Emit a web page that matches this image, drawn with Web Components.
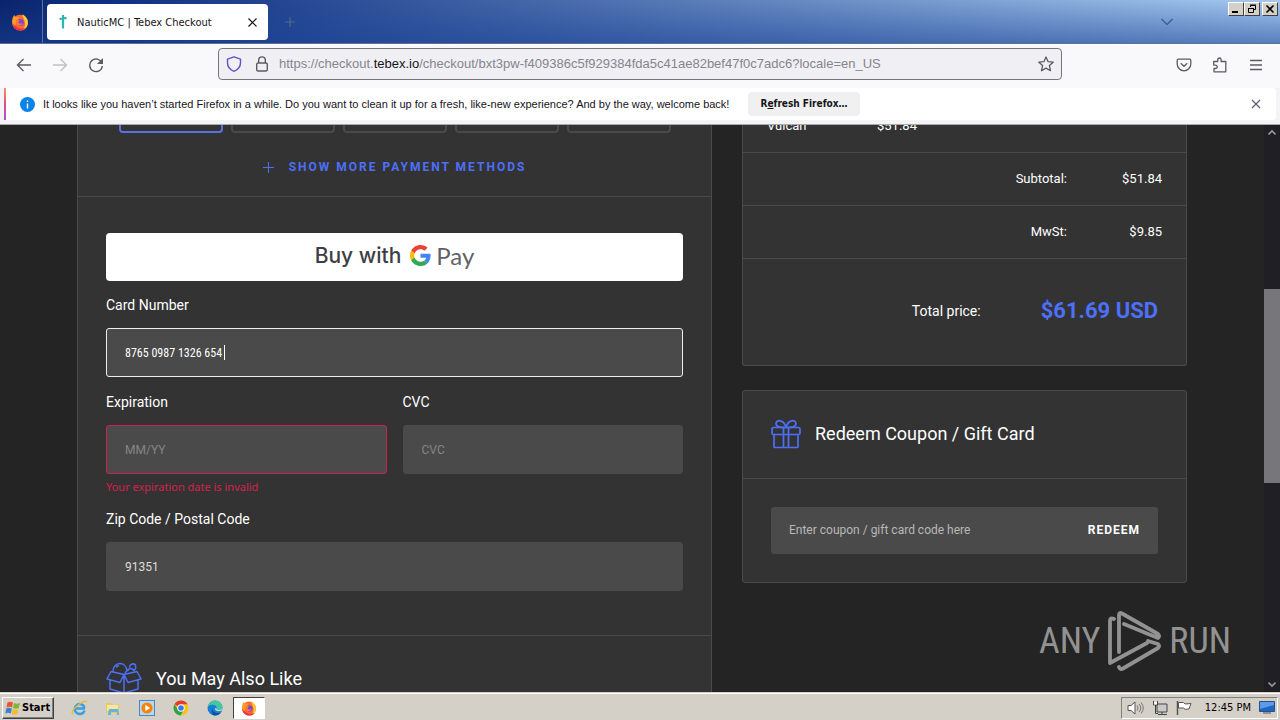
<!DOCTYPE html>
<html lang="en">
<head>
<meta charset="utf-8">
<title>NauticMC | Tebex Checkout</title>
<style>
  html, body { margin: 0; height: 100%; }
  body { font-family: Roboto, sans-serif; overflow: hidden; }
</style>
</head>
<body>
<desktop-screen></desktop-screen>

<script>
const BASE = `<style>
  *, *::before, *::after { box-sizing: border-box; }
  button { font: inherit; color: inherit; background: none; border: 0; padding: 0; margin: 0; }
  svg { display: block; flex: none; }
</style>`;

function define(name, render) {
  customElements.define(name, class extends HTMLElement {
    connectedCallback() {
      if (this.shadowRoot) return;
      this.attachShadow({ mode: 'open' }).innerHTML = BASE + render(this);
    }
  });
}

const firefox = size => `<svg width="${size}" height="${size}" viewBox="0 0 16 16" aria-hidden="true">
  <circle cx="8" cy="8.6" r="7" fill="#ff6a2b"/>
  <path d="M10 1c3 1.500 5.200 4.300 5 8-.3 3.600-3 6.600-7 6.600 3-1 5-3.500 4.500-7C12.200 5.500 10.500 4 10 1z" fill="#ffc83a"/>
  <path d="M1.200 7C1 4.500 2 3 3 1.800c.3 1 .8 1.600 1.400 2 1-.4 2-.4 3 .2L5 7.500 3 13C1.600 11.200 1.100 9 1.200 7z" fill="#ff9a2b"/>
  <path d="M1.200 9c.6 4 3.500 6.600 7 6.600 2.300 0 4.300-1 5.500-2.700-3.700 1.700-9 .8-12.500-3.900z" fill="#f0304f"/>
  <circle cx="8.300" cy="8.500" r="3.100" fill="#7a45d8"/>
  <path d="M4.400 6.400c1.200-.8 2.600-.2 3.900.3-1 .3-1.600.9-1.700 1.700 1 1.500 2.700 1 3.900.7-.8 1.700-2.500 2.500-4.200 1.900-1.700-.7-2.400-2.800-1.900-4.600z" fill="#ff7a33"/>
</svg>`;

define('desktop-screen', () => `
<style>
  :host { display: flex; flex-direction: column; height: 100vh; min-height: 0; }
  title-bar, tool-bar, notice-bar, task-bar { flex: none; }
  checkout-page { flex: 1; min-height: 0; }
</style>
<title-bar></title-bar>
<tool-bar></tool-bar>
<notice-bar></notice-bar>
<checkout-page></checkout-page>
<task-bar></task-bar>`);

define('title-bar', () => `
<style>
  :host { display: flex; height: 44px; border-bottom: 1px solid #5f6f94; color: #15141a;
    font: 11px/16px Tahoma, "DejaVu Sans Condensed", "DejaVu Sans", sans-serif;
    background: linear-gradient(180deg, rgba(20,60,150,0) 0%, rgba(25,65,150,.55) 100%), linear-gradient(90deg, #0a246a 0%, #0e2f80 8%, #a6caf0 100%); }
  .view { width: 43px; display: grid; place-items: center; padding-right: 3px; border-right: 1px solid #5a71a8; }
  .tab { display: flex; align-items: center; gap: 8px; width: 221px; margin: 4px 0 3px 4px; padding: 0 10px; border-radius: 4px; background: #fff; }
  .tab span { flex: 1; white-space: nowrap; padding-top: 2px; }
  .new { width: 43px; display: grid; place-items: center; }
  .all { margin-left: auto; width: 40px; display: grid; place-items: center; margin-right: 41px; }
  .win { display: flex; padding: 2px 2px 0 0; align-items: flex-start; }
  .win button { width: 16px; height: 14px; display: grid; place-items: center; background: #d4d0c8; border: 1px solid; border-color: #fff #404040 #404040 #fff; }
  .win button:last-child { margin-left: 2px; }
</style>
<div class="view">${firefox(18)}</div>
<div class="tab">
  <svg width="12" height="16" viewBox="0 0 12 16"><path d="M6 1v13.500M2.500 5l7-1.200" stroke="#2fb5ae" stroke-width="2.200" fill="none"/></svg>
  <span>NauticMC | Tebex Checkout</span>
  <button aria-label="Close tab"><svg width="11" height="11" viewBox="0 0 11 11"><path d="M1.500 1.500l8 8M9.500 1.500l-8 8" stroke="#15141a" stroke-width="1.200"/></svg></button>
</div>
<button class="new" aria-label="New tab"><svg width="12" height="12" viewBox="0 0 12 12"><path d="M6 1v10M1 6h10" stroke="#52688a" stroke-width="1.200"/></svg></button>
<button class="all" aria-label="List all tabs"><svg width="14" height="8" viewBox="0 0 14 8"><path d="M1.500 1L7 6.500 12.500 1" stroke="#43608f" stroke-width="1.500" fill="none"/></svg></button>
<div class="win">
  <button aria-label="Minimize"><svg width="10" height="10" viewBox="0 0 10 10"><path d="M1 8h6" stroke="#000" stroke-width="2"/></svg></button>
  <button aria-label="Restore"><svg width="10" height="10" viewBox="0 0 10 10"><path d="M3.500 3V1.500h5v4H7M3 1h6M1.500 5v3.500h5V5M1 4.500h6" stroke="#000" fill="none"/></svg></button>
  <button aria-label="Close"><svg width="10" height="10" viewBox="0 0 10 10"><path d="M1.500 1.500l7 7M8.500 1.500l-7 7" stroke="#000" stroke-width="1.600"/></svg></button>
</div>`);

define('tool-bar', () => `
<style>
  :host { display: flex; align-items: center; height: 44px; background: #f9f9fb; border-top: 1px solid #fff; padding: 0 16px;
    font: 13px/18px "Liberation Sans", sans-serif; }
  .nav { display: flex; gap: 20px; width: 202px; flex: none; }
  .url { flex: 0 1 844px; display: flex; align-items: center; height: 32px; margin-bottom: 5px; border: 1px solid #75757e; border-radius: 4px; background: #f0f0f4; padding: 0 7px; }
  .url svg + svg { margin: 0 9px 0 12px; }
  .url a { flex: 1; color: #85858c; text-decoration: none; white-space: nowrap; overflow: hidden; }
  .url b { font-weight: normal; color: #15141a; }
  .tools { margin-left: auto; display: flex; gap: 20px; }
  .nav, .tools { margin-bottom: 4px; }
</style>
<div class="nav">
  <button aria-label="Back"><svg width="16" height="16" viewBox="0 0 16 16"><path d="M15 8H1.500M7.500 2l-6 6 6 6" stroke="#5b5b66" stroke-width="1.400" fill="none"/></svg></button>
  <button aria-label="Forward" disabled><svg width="16" height="16" viewBox="0 0 16 16"><path d="M1 8h13.500M8.500 2l6 6-6 6" stroke="#c0c0c6" stroke-width="1.400" fill="none"/></svg></button>
  <button aria-label="Reload"><svg width="16" height="16" viewBox="0 0 16 16"><path d="M13.900 6A6.300 6.300 0 1 0 14.300 9" stroke="#5b5b66" stroke-width="1.400" fill="none"/><path d="M15 1v6H9z" fill="#5b5b66"/></svg></button>
</div>
<div class="url">
  <svg width="16" height="16" viewBox="0 0 16 16"><path d="M8 .8l6.500 2.400v3.600c0 4-2.600 7-6.500 8.500C4.100 13.800 1.500 10.800 1.500 6.800V3.200z" stroke="#6650c0" stroke-width="1.400" fill="none" stroke-linejoin="round"/></svg>
  <svg width="16" height="16" viewBox="0 0 16 16"><rect x="2.700" y="7" width="10.600" height="8" rx="1.500" stroke="#5b5b66" stroke-width="1.400" fill="none"/><path d="M4.700 7V4.200a3.300 3.300 0 0 1 6.600 0V7" stroke="#5b5b66" stroke-width="1.400" fill="none"/></svg>
  <a href="#checkout">https://checkout.<b>tebex.io</b>/checkout/bxt3pw-f409386c5f929384fda5c41ae82bef47f0c7adc6?locale=en_US</a>
  <button aria-label="Bookmark this page"><svg width="16" height="16" viewBox="0 0 16 16"><path d="M8 1l2.100 4.700 5.100.5-3.800 3.400 1.100 5.100L8 12.100l-4.500 2.600 1.100-5.100L.8 6.200l5.100-.5z" stroke="#5b5b66" stroke-width="1.300" fill="none" stroke-linejoin="round"/></svg></button>
</div>
<div class="tools">
  <button aria-label="Save to Pocket"><svg width="16" height="16" viewBox="0 0 16 16"><path d="M2.500 2.200h11a1.300 1.300 0 0 1 1.300 1.300V7a6.800 6.800 0 0 1-13.600 0V3.500a1.300 1.300 0 0 1 1.300-1.300zM4.800 6.300L8 9.300l3.200-3" stroke="#5b5b66" stroke-width="1.300" fill="none"/></svg></button>
  <button aria-label="Extensions"><svg width="16" height="16" viewBox="0 0 16 16"><path d="M2 14.800V11.500h1.500a1.700 1.700 0 0 0 0-3.400H1.700V4.500h4V2.700a1.700 1.700 0 0 1 3.400 0v1.800h4.700v10.300z" stroke="#5b5b66" stroke-width="1.300" fill="none" stroke-linejoin="round"/></svg></button>
  <button aria-label="Menu"><svg width="16" height="16" viewBox="0 0 16 16"><path d="M2 3.500h12M2 8h12M2 12.500h12" stroke="#5b5b66" stroke-width="1.300"/></svg></button>
</div>`);

define('notice-bar', () => `
<style>
  :host { display: flex; height: 37px; background: #f4f4f6; border-bottom: 1px solid #aaa; padding: 0 4px 4px; }
  .bar { flex: 1; display: flex; align-items: center; background: #fff; border-radius: 0 4px 4px 0; padding: 0 12px 0 14px;
    border-left: 2px solid; border-image: linear-gradient(#f7925a, #e84b90, #9a55d8) 1;
    font: 11px/16px "Liberation Sans", sans-serif; color: #15141a; }
  p { flex: none; min-width: 705px; margin: 0 0 0 8px; white-space: nowrap; }
  .act { width: 112px; height: 24px; background: #f0f0f1; border-radius: 4px; font: bold 10px/16px Tahoma, "DejaVu Sans Condensed", "DejaVu Sans", sans-serif; white-space: nowrap; }
  .x { margin-left: auto; width: 16px; display: grid; place-items: center; }
</style>
<div class="bar" role="status">
  <svg width="15" height="15" viewBox="0 0 15 15"><circle cx="7.500" cy="7.500" r="7.500" fill="#0a84e6"/><path d="M7.500 6.500v5M7.500 3.500v1.500" stroke="#fff" stroke-width="1.400"/></svg>
  <p>It looks like you haven’t started Firefox in a while. Do you want to clean it up for a fresh, like-new experience? And by the way, welcome back!</p>
  <button class="act">R<u>e</u>fresh Firefox…</button>
  <button class="x" aria-label="Close message"><svg width="10" height="10" viewBox="0 0 10 10"><path d="M1 1l8 8M9 1L1 9" stroke="#5b5b66" stroke-width="1.200"/></svg></button>
</div>`);

define('checkout-page', () => `
<style>
  :host { display: flex; position: relative; background: #242424; color: #fff; overflow: hidden; font: 14px/20px Roboto, sans-serif; }
  main { flex: 1; overflow: hidden; }
  .columns { display: grid; grid-template-columns: 635fr 445fr; gap: 30px; align-items: start; max-width: 1110px; margin: -25px auto 0; }
  aside { display: grid; gap: 24px; }
  page-scrollbar { flex: none; }
  run-watermark { position: absolute; right: 49px; bottom: 20px; }
</style>
<main><div class="columns">
  <payment-card></payment-card>
  <aside><order-summary></order-summary><coupon-card></coupon-card></aside>
</div></main>
<page-scrollbar></page-scrollbar>
<run-watermark></run-watermark>`);

define('payment-card', () => `
<style>
  :host { display: block; background: #333; border: 1px solid #4a4a4a; border-top: 0; }
  section { border-bottom: 1px solid #4a4a4a; padding: 0 28px; }
  .methods { padding-bottom: 19px; }
  .tiles { display: flex; justify-content: center; gap: 8px; }
  .tiles button { width: 104px; height: 33px; border: 2px solid #4a4a4a; border-top: 0; border-radius: 0 0 4px 4px; }
  .tiles button:first-child { border-color: #5a6fe0; }
  .more { display: flex; align-items: center; justify-content: center; gap: 15px; width: 100%; margin-top: 24px;
    color: #4d70fa; font-weight: 700; font-size: 12px; line-height: 20px; letter-spacing: 2px; text-transform: uppercase; }
  .form { padding-top: 36px; padding-bottom: 44px; }
  .gpay { display: flex; align-items: center; justify-content: center; width: 100%; height: 48px; margin-bottom: 14px; padding-bottom: 2px; background: #fff; border-radius: 4px; color: #3c4043; font: 500 21px/28px Inter, Roboto, sans-serif; }
  .gpay svg { margin: 0 5px 2px 9px; }
  .gpay .pay { font: 400 24px/28px Lato, Roboto, sans-serif; color: #5f6368; }
  form { display: grid; grid-template-columns: 1fr 1fr; column-gap: 16px; row-gap: 15px; align-items: start; }
  .wide { grid-column: 1 / -1; }
  .also { display: flex; align-items: flex-start; gap: 14px; border: 0; padding-top: 26px; height: 80px; }
  h2 { margin: 4px 0 0; font-weight: 400; font-size: 18px; line-height: 26px; }
</style>
<section class="methods">
  <div class="tiles">${[1, 2, 3, 4, 5].map(n => `<button aria-label="Payment method ${n}"></button>`).join('')}</div>
  <button class="more"><svg width="11" height="11" viewBox="0 0 11 11"><path d="M5.500 0v11M0 5.500h11" stroke="#4d70fa"/></svg>Show more payment methods</button>
</section>
<section class="form">
  <button class="gpay"><span>Buy with</span>
    <svg width="21" height="21" viewBox="0 0 48 48"><path fill="#EA4335" d="M24 9.500c3.500 0 6.700 1.200 9.200 3.600l6.900-6.900C35.900 2.400 30.500 0 24 0 14.600 0 6.500 5.400 2.600 13.200l8 6.200C12.400 13.700 17.700 9.500 24 9.500z"/><path fill="#4285F4" d="M47 24.600c0-1.600-.2-3.100-.4-4.600H24v9h12.900c-.6 3-2.300 5.500-4.800 7.200l7.700 6C44.400 38 47 31.800 47 24.600z"/><path fill="#FBBC05" d="M10.500 28.600a14.500 14.500 0 0 1 0-9.200l-8-6.200a24 24 0 0 0 0 21.600z"/><path fill="#34A853" d="M24 48c6.500 0 11.900-2.100 15.900-5.800l-7.700-6c-2.200 1.500-5 2.300-8.200 2.300-6.300 0-11.600-4.200-13.500-9.900l-8 6.200C6.500 42.600 14.600 48 24 48z"/></svg>
    <span class="pay">Pay</span></button>
  <form>
    <text-field class="wide" label="Card Number" value="8765 0987 1326 654" active></text-field>
    <text-field label="Expiration" placeholder="MM/YY" error="Your expiration date is invalid"></text-field>
    <text-field label="CVC" placeholder="CVC"></text-field>
    <text-field class="wide" label="Zip Code / Postal Code" value="91351"></text-field>
  </form>
</section>
<section class="also">
  <svg width="36" height="32" viewBox="0 0 36 32" fill="none" stroke="#4d70fa" stroke-width="1.500" stroke-linejoin="round"><path d="M5 9.500L1 17l13 3.500 4-8zM31 9.500l4 7.500-13 3.500-4-8zM5 9.500l13 3 13-3M4 18v9l14 4 14-4v-9M18 12.500V31M7 9.500C7 5 10 1.500 14 1.500S20.500 5 21 8.500L19 11M21.500 9c1-3 4-3.500 6-1 2 .3 3-3 1.500-5.500-2.500-1.500-5.500 0-5.500 3M10 5l3-1.500M26 7l2.500 2"/></svg>
  <h2>You May Also Like</h2>
</section>`);

define('text-field', el => {
  const get = k => el.getAttribute(k);
  return `
<style>
  :host { display: block; min-width: 0; }
  label { display: block; margin-bottom: 13px; line-height: 20px; }
  .box { position: relative; }
  input { display: block; width: 100%; height: 49px; padding: 0 18px; border: 1px solid #4a4a4a; border-radius: 3px; background: #4a4a4a; color: #ddd; font: 12px/20px Roboto, sans-serif; outline: 0; }
  input::placeholder { color: #858585; opacity: 1; }
  :host([active]) input { border-color: #eee; color: #fff; font: 12px/20px "Roboto Condensed", Roboto, sans-serif; }
  :host([error]) input { border-color: #c9244f; }
  .caret { position: absolute; left: 118px; top: 17px; width: 1px; height: 15px; background: #fff; }
  .error { margin: 6px 0 0; color: #d3214f; font: 11px/14px "Noto Sans", sans-serif; }
</style>
<label for="field">${get('label')}</label>
<div class="box"><input id="field" type="text" placeholder="${get('placeholder') || ''}" value="${get('value') || ''}">${el.hasAttribute('active') ? '<span class="caret"></span>' : ''}</div>
${get('error') ? `<p class="error" role="alert">${get('error')}</p>` : ''}`;
});

define('order-summary', () => `
<style>
  :host { display: block; background: #333; border: 1px solid #4a4a4a; border-top: 0; border-radius: 0 0 3px 3px; font-size: 13px; }
  table { width: 100%; border-collapse: separate; border-spacing: 0; table-layout: fixed; }
  col.name { width: 134px; } col.value { width: 119px; }
  td, th { height: 53px; padding: 0 24px 0 0; border-bottom: 1px solid #4a4a4a; font-weight: 400; text-align: right; vertical-align: middle; }
  .item th { padding-left: 24px; text-align: left; }
  .item td { text-align: left; padding: 0; }
  tr:not(.item) th { padding: 0; }
  .total { display: flex; align-items: center; justify-content: flex-end; gap: 60px; height: 106px; padding: 0 28px 2px 0; font-size: 14px; }
  strong { color: #4d70fa; font-size: 22px; line-height: 28px; font-weight: 700; }
</style>
<table>
  <colgroup><col class="name"><col><col class="value"></colgroup>
  <tr class="item"><th scope="row">Vulcan</th><td>$51.84</td><td></td></tr>
  <tr><th scope="row" colspan="2">Subtotal:</th><td>$51.84</td></tr>
  <tr><th scope="row" colspan="2">MwSt:</th><td>$9.85</td></tr>
</table>
<div class="total"><span>Total price:</span><strong>$61.69 USD</strong></div>`);

define('coupon-card', () => `
<style>
  :host { display: block; background: #333; border: 1px solid #4a4a4a; border-radius: 3px; }
  header { display: flex; align-items: center; gap: 14px; height: 88px; padding: 0 28px 2px; border-bottom: 1px solid #4a4a4a; }
  h2 { margin: 0; font-weight: 400; font-size: 18px; line-height: 26px; }
  form { display: flex; align-items: center; height: 47px; margin: 28px; background: #4a4a4a; border-radius: 3px; padding: 0 18px 2px; }
  input { flex: 1; min-width: 0; border: 0; padding: 0; background: none; color: #fff; font: 12px/20px Roboto, sans-serif; outline: 0; }
  input::placeholder { color: #b8b8b8; opacity: 1; }
  button { font-size: 12px; font-weight: 700; letter-spacing: 1px; }
</style>
<header>
  <svg width="30" height="30" viewBox="0 0 30 30" fill="none" stroke="#4d70fa" stroke-width="1.700"><rect x="1" y="8.500" width="28" height="7" rx="1.500"/><path d="M3 15.500v12a1 1 0 0 0 1 1h22a1 1 0 0 0 1-1v-12M12.500 8.500v20M17.500 8.500v20M15 8.500C12.500 8.500 5 9 5 4.500 5 .5 13 0 15 8.500zM15 8.500c2.500 0 10 .5 10-4C25 .5 17 0 15 8.500z"/></svg>
  <h2>Redeem Coupon / Gift Card</h2>
</header>
<form>
  <input type="text" aria-label="Coupon code" placeholder="Enter coupon / gift card code here">
  <button type="button">REDEEM</button>
</form>`);

define('page-scrollbar', () => `
<style>
  :host { display: flex; flex-direction: column; width: 16px; background: #201f26; }
  svg { margin: 4px 4px; }
  .before { flex: 149; } .thumb { flex: 193; background: #77767b; } .after { flex: 194; }
</style>
<svg width="8" height="7" viewBox="0 0 8 7"><path d="M.5 5.500L4 2l3.500 3.500" stroke="#96959b" stroke-width="1.600" fill="none"/></svg>
<div class="before"></div><div class="thumb"></div><div class="after"></div>
<svg width="8" height="7" viewBox="0 0 8 7"><path d="M.5 1.500L4 5l3.500-3.500" stroke="#96959b" stroke-width="1.600" fill="none"/></svg>`);

define('run-watermark', () => `
<style>
  :host { display: flex; align-items: center; gap: 7px; color: #929292; pointer-events: none;
    font: 36px/48px "Roboto Condensed", "Open Sans Condensed", "Liberation Sans Narrow", sans-serif; }
</style>
<span>ANY</span>
<svg width="55" height="62" viewBox="0 0 55 62" fill="none" stroke="#929292" stroke-width="3.800" stroke-linecap="round" stroke-linejoin="round"><path d="M7 9Q3 7 3 11V53L40 33M12 42V5Q12 2 15 3.500L51 24Q53 26 51 28L17 14M41 31L51 34Q53 36 51 38L16 58.500Q13 60 12 57"/></svg>
<span>RUN</span>`);

define('task-bar', () => `
<style>
  :host { display: flex; align-items: center; height: 28px; background: #d4d0c8; border-top: 1px solid #d4d0c8; box-shadow: inset 0 1px #fff; padding: 2px 2px 0 2px; color: #000;
    font: 11px/16px Tahoma, "DejaVu Sans Condensed", "DejaVu Sans", sans-serif; }
  .start { display: flex; align-items: center; gap: 1px; width: 52px; height: 22px; padding: 0 2px; border: 1px solid; border-color: #fff #404040 #404040 #fff; box-shadow: inset -1px -1px #808080; font-weight: bold; white-space: nowrap; }
  .apps { display: flex; gap: 2px; margin-left: 9px; }
  .apps button { width: 32px; height: 22px; display: grid; place-items: center; }
  .apps .on { background: #fff; border: 1px solid; border-color: #404040 #fff #fff #404040; }
  .tray { margin-left: auto; display: flex; align-items: center; gap: 8px; height: 22px; padding: 0 2px 0 5px; border: 1px solid; border-color: #808080 #fff #fff #808080; white-space: nowrap; }
  time { margin: 0 0 0 5px; }
</style>
<button class="start"><svg width="16" height="16" viewBox="0 0 16 16"><path d="M2.500 2.500Q5 1 8 2.500L7 7.500Q4 6 1.500 7.500z" fill="#e8562a"/><path d="M9 3q3 1.500 6 0l-1.200 5q-3 1.500-5.800 0z" fill="#7db83a"/><path d="M1.300 8.500Q4 7 6.800 8.500l-1 5Q3 12 .3 13.500z" fill="#3a7fd0"/><path d="M7.800 9q3 1.500 5.800 0l-1.200 5q-3 1.500-5.600 0z" fill="#f5bd2b"/></svg>Start</button>
<div class="apps">
  <button aria-label="Internet Explorer"><svg width="17" height="16" viewBox="0 0 17 16"><path d="M13.500 10.500A5 5 0 1 1 13.500 7.500M4 8.500h10" fill="none" stroke="#3a9fe0" stroke-width="2.500"/><path d="M2 14c-2 0 0-5 4.500-8.500S15.500 0 16 2" fill="none" stroke="#e6b93a" stroke-width="1.300"/></svg></button>
  <button aria-label="Explorer"><svg width="16" height="16" viewBox="0 0 16 16"><path d="M1 3h5l1 1.500h7V13H1z" fill="#e8c765"/><path d="M2 5h11v6H2z" fill="#f8e79f"/><path d="M4 9h9l1 6h-2v-3H6v3H3z" fill="#62b5dc"/></svg></button>
  <button aria-label="Media Player"><svg width="16" height="16" viewBox="0 0 16 16"><rect x=".5" y=".5" width="15" height="15" fill="#b9d8ef" stroke="#4b88b8"/><circle cx="8" cy="8" r="5.600" fill="#f5820a"/><path d="M6.300 4.800L11 8l-4.700 3.200z" fill="#fff"/></svg></button>
  <button aria-label="Chrome"><svg width="16" height="16" viewBox="0 0 16 16"><circle cx="8" cy="8" r="7.500" fill="#fbc116"/><path d="M8 8L1.500 4.300A7.500 7.500 0 0 1 14.500 4.300H8z" fill="#e33b2e"/><path d="M1.500 4.300A7.500 7.500 0 0 0 7.500 15.500L11 9.500 8 8 4.800 9.800z" fill="#2fa24c"/><circle cx="8" cy="8" r="3.700" fill="#fff"/><circle cx="8" cy="8" r="2.800" fill="#3b78e7"/></svg></button>
  <button aria-label="Edge"><svg width="16" height="16" viewBox="0 0 16 16"><circle cx="8" cy="8" r="7.500" fill="#1680d8"/><path d="M.6 7C1.500 3 4.600.5 8 .5c4.500 0 7.500 3.200 7.500 6.500 0 2-1.500 3.200-3.500 3.200s-3-.8-2.500-1.700C10.300 6 7.500 4.500 5 4.800 3 5 1.500 5.800.6 7z" fill="#45c8a0"/><path d="M5.500 8.500c0 3.500 3.500 5.500 8.500 4-1.500 2-4 3.300-6.500 3-3-.8-3.500-4.500-2-7z" fill="#124f9e"/><path d="M8 8c-.5 2.500 2.500 4.300 7 2.500l.5-3C15 9.500 13.500 10 12 10s-2.800-.7-2.500-1.500z" fill="#d4d0c8"/></svg></button>
  <button class="on" aria-label="Firefox">${firefox(16)}</button>
</div>
<div class="tray">
  <svg width="17" height="16" viewBox="0 0 17 16"><path d="M1 5.500h3L8 2v12l-4-3.500H1z" fill="#fff" stroke="#555"/><path d="M10 5.500q2 2.500 0 5M12 4q3.500 4 0 8M14 2.500q4.500 5.500 0 11" stroke="#777" fill="none"/></svg>
  <svg width="16" height="16" viewBox="0 0 16 16"><path d="M5 4h10v8H5z" fill="#c9c9c9" stroke="#444"/><path d="M6 14.500h9M10 12v2M1.500 1v4h4V1M3.500 5v8.500H6" stroke="#444" fill="none"/><path d="M2 2h3v2.500H2z" fill="#fff"/></svg>
  <svg width="16" height="16" viewBox="0 0 16 16"><path d="M1.500 1v14" stroke="#555" stroke-width="1.500"/><path d="M2.500 2.500h5l1.500 1.500 6-.5-2 5.500-4 .3L7.500 8h-5z" fill="#fff" stroke="#555"/></svg>
  <time>12:45 PM</time>
  <svg width="16" height="13" viewBox="0 0 16 13"><path d="M.5.5h15v10H.5z" fill="#1d66c8" stroke="#2a4e82"/><path d="M1 1h14v3L1 8z" fill="#5b9be8"/><path d="M4 12h8" stroke="#555"/></svg>
</div>`);
</script>
</body>
</html>
